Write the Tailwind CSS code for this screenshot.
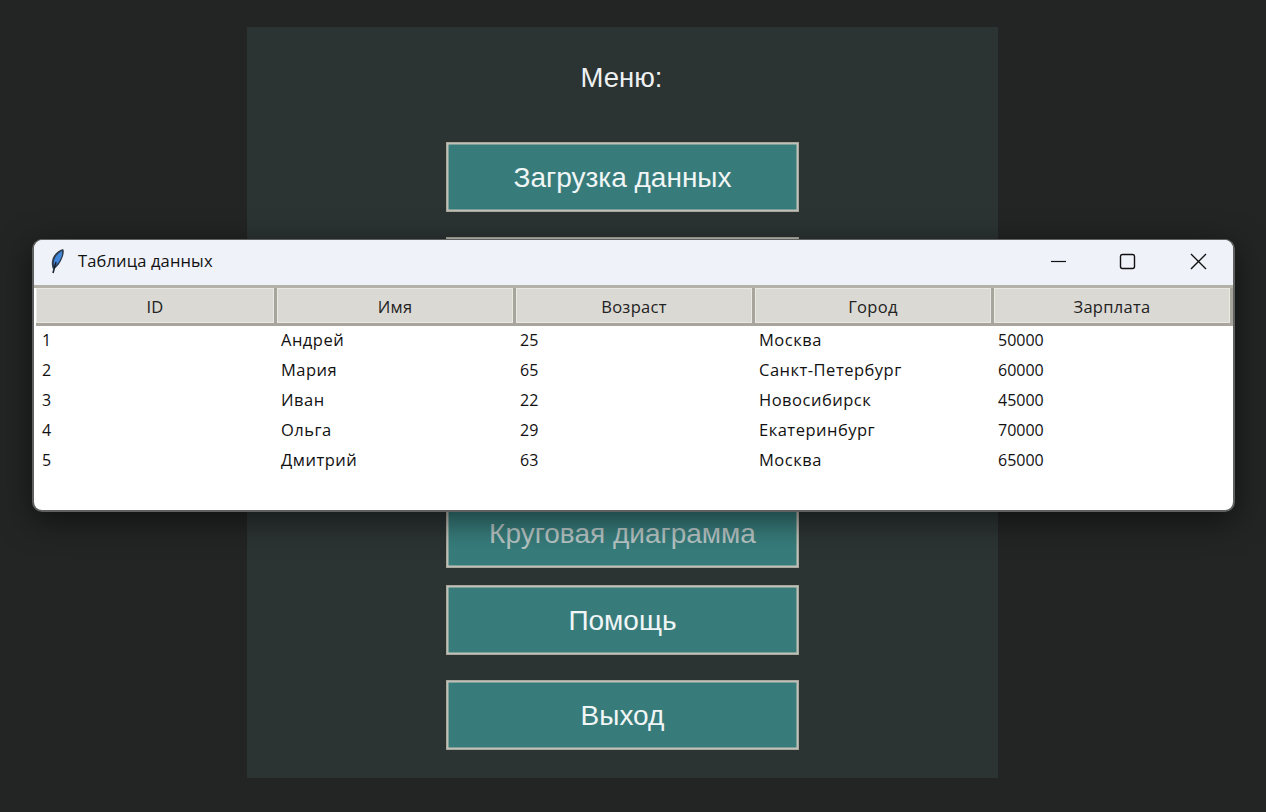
<!DOCTYPE html>
<html lang="en">
<head>
    <meta charset="UTF-8">
    <title>Таблица данных</title>
    <script src="https://cdn.jsdelivr.net/npm/@tailwindcss/browser@4"></script>
</head>
<body class="relative w-[1266px] h-[812px] overflow-hidden bg-[#222524] font-['Liberation_Sans',sans-serif]">
    <!-- main menu window -->
    <div class="ml-[247px] w-[751px] h-[751px] mt-[27px] absolute top-0 left-0 bg-[#2c3333] flex flex-col items-center">
        <div class="h-[115px] pt-[33px] text-[27.5px] leading-[36px] text-[#eef1f1] -ml-[2px]">Меню:</div>
        <button class="w-[353px] h-[70px] pt-[2px] border border-[#a8a79d] shadow-[inset_0_0_0_1.5px_#c2c1b8] bg-[#377c7b] text-[28px] text-[#f0f5f5]">Загрузка данных</button>
        <button class="w-[353px] h-[70px] mt-[25px] border border-[#a8a79d] shadow-[inset_0_0_0_1.5px_#c2c1b8] bg-[#377c7b] text-[28px] text-[#f0f5f5]"></button>
        <button class="w-[353px] h-[70px] mt-[17px] border border-[#a8a79d] shadow-[inset_0_0_0_1.5px_#c2c1b8] bg-[#377c7b] text-[28px] text-[#f0f5f5]"></button>
        <button class="w-[353px] h-[70px] mt-[17px] border border-[#a8a79d] shadow-[inset_0_0_0_1.5px_#c2c1b8] bg-[#377c7b] text-[28px] text-[#f0f5f5]"></button>
        <button class="w-[353px] h-[70px] pt-[2px] mt-[17px] border border-[#a8a79d] shadow-[inset_0_0_0_1.5px_#c2c1b8] bg-[#377c7b] text-[28px] text-[#b6c4c3]">Круговая диаграмма</button>
        <button class="w-[353px] h-[70px] pt-[2px] mt-[17px] border border-[#a8a79d] shadow-[inset_0_0_0_1.5px_#c2c1b8] bg-[#377c7b] text-[28px] text-[#f0f5f5]">Помощь</button>
        <button class="w-[353px] h-[70px] pt-[2px] mt-[25px] border border-[#a8a79d] shadow-[inset_0_0_0_1.5px_#c2c1b8] bg-[#377c7b] text-[28px] text-[#f0f5f5]">Выход</button>
    </div>

    <!-- data table window, floats over the menu -->
    <div class="absolute left-[32px] top-[239px] w-[1203px] h-[273px] rounded-[10px] border-2 border-t border-[#5f6160] overflow-hidden bg-white shadow-[0_8px_32px_rgba(0,0,0,0.55)] font-['Open_Sans',sans-serif]">
        <div class="h-[45px] pb-[2px] bg-[#eff2f9] flex items-center">
            <svg class="ml-[14px] w-[20px] h-[26px]" viewBox="0 0 20 26">
                <path d="M15 0C10 1 5 6 4 12c-.5 3 0 6 1 8 4-1 8-7 10-13 1-3 1-6 0-7z" fill="#2d3c4e"/>
                <path d="M14 2C10 4 7 8 6 12c-.5 2 0 4 .5 5 3.500-2 6-6 7.500-11z" fill="#3f86da"/>
                <path d="M8 13L5 24" stroke="#1a2430" stroke-width="1.6" fill="none"/>
            </svg>
            <span class="ml-[10px] text-[16.5px] tracking-[0.15px] text-[#111]">Таблица данных</span>
            <div class="ml-auto flex items-center">
                <svg class="w-[71px] h-[20px]" viewBox="0 0 71 20"><path d="M31 9.500h15" stroke="#111" stroke-width="1.2"/></svg>
                <svg class="w-[71px] h-[20px]" viewBox="0 0 71 20"><rect x="29.500" y="2.500" width="14" height="14" rx="2" fill="none" stroke="#111" stroke-width="1.4"/></svg>
                <svg class="w-[71px] h-[20px]" viewBox="0 0 71 20"><path d="M29 2l15 15M44 2L29 17" stroke="#111" stroke-width="1.4"/></svg>
            </div>
        </div>
        <div class="h-[3px] bg-[#b3b1a8]"></div>
        <div class="grid grid-cols-[241px_239px_239px_239px_239px] ml-[2px] text-[#222]">
            <div class="h-[38px] pt-[4px] flex items-center justify-center bg-[#dbd9d4] border-r-[3px] border-b-[3px] border-[#a8a69c] shadow-[inset_0_0_0_1px_#e9e8e3] text-[16.5px] tracking-[0.3px]">ID</div>
            <div class="h-[38px] pt-[4px] flex items-center justify-center bg-[#dbd9d4] border-r-[3px] border-b-[3px] border-[#a8a69c] shadow-[inset_0_0_0_1px_#e9e8e3] text-[16.5px] tracking-[0.3px]">Имя</div>
            <div class="h-[38px] pt-[4px] flex items-center justify-center bg-[#dbd9d4] border-r-[3px] border-b-[3px] border-[#a8a69c] shadow-[inset_0_0_0_1px_#e9e8e3] text-[16.5px] tracking-[0.3px]">Возраст</div>
            <div class="h-[38px] pt-[4px] flex items-center justify-center bg-[#dbd9d4] border-r-[3px] border-b-[3px] border-[#a8a69c] shadow-[inset_0_0_0_1px_#e9e8e3] text-[16.5px] tracking-[0.3px]">Город</div>
            <div class="h-[38px] pt-[4px] flex items-center justify-center bg-[#dbd9d4] border-r-[3px] border-b-[3px] border-[#a8a69c] shadow-[inset_0_0_0_1px_#e9e8e3] text-[16.5px] tracking-[0.3px]">Зарплата</div>
        </div>
        <div class="-mt-[1px] pl-[8px] grid grid-cols-[239px_239px_239px_239px_231px] auto-rows-[30px] items-center text-[16px] text-[#111]">
            <div>1</div><div class="text-[16.5px] tracking-[0.5px]">Андрей</div><div>25</div><div class="text-[16.5px] tracking-[0.5px]">Москва</div><div>50000</div>
            <div>2</div><div class="text-[16.5px] tracking-[0.5px]">Мария</div><div>65</div><div class="text-[16.5px] tracking-[0.5px]">Санкт-Петербург</div><div>60000</div>
            <div>3</div><div class="text-[16.5px] tracking-[0.5px]">Иван</div><div>22</div><div class="text-[16.5px] tracking-[0.5px]">Новосибирск</div><div>45000</div>
            <div>4</div><div class="text-[16.5px] tracking-[0.5px]">Ольга</div><div>29</div><div class="text-[16.5px] tracking-[0.5px]">Екатеринбург</div><div>70000</div>
            <div>5</div><div class="text-[16.5px] tracking-[0.5px]">Дмитрий</div><div>63</div><div class="text-[16.5px] tracking-[0.5px]">Москва</div><div>65000</div>
        </div>
    </div>
</body>
</html>
